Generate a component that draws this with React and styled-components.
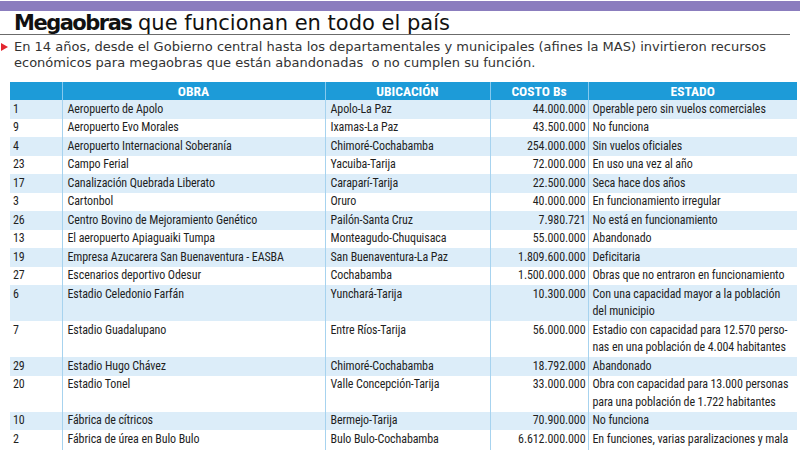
import React from "react";
import styled, { createGlobalStyle } from "styled-components";

const Global = createGlobalStyle`
  html, body { margin: 0; padding: 0; background: #fff; }
  body { font-family: "DejaVu Sans", sans-serif; color: #222; }
`;

const Page = styled.div`
  width: 800px;
  overflow: hidden;
`;

const TopBar = styled.div`
  height: 10px;
  margin-top: 1px;
  background: #8b7dbe;
`;

const TitleRow = styled.div`
  margin-right: 10px;
  padding: 2px 0 0 14px;
  border-bottom: 1px solid #6b6b6b;
`;

const Title = styled.h1`
  margin: 0;
  font-family: "DejaVu Sans", sans-serif;
  font-size: 21px;
  line-height: 21px;
  font-weight: normal;
  color: #111;
`;

const TitleStrong = styled.b`
  font-weight: bold;
  letter-spacing: -1.5px;
`;

const Lead = styled.div`
  display: flex;
  align-items: flex-start;
  gap: 6px;
  padding: 4px 0 0 1px;
`;

const Bullet = styled.span`
  flex: none;
  width: 0;
  height: 0;
  margin-top: 4px;
  border-top: 4px solid transparent;
  border-bottom: 4px solid transparent;
  border-left: 7px solid #e3262f;
`;

const LeadText = styled.p`
  margin: 0;
  font-family: "DejaVu Sans", sans-serif;
  font-size: 13px;
  line-height: 16px;
  color: #333;
`;

const Table = styled.table`
  margin: 11px 0 0 10px;
  width: 787px;
  border-collapse: collapse;
  table-layout: fixed;
  font-family: "Roboto", sans-serif;
  font-stretch: 87.5%;
  font-size: 12px;
  color: #1f1f1f;
`;

const Col = styled.col`
  width: ${(p) => p.$w}px;
`;

const Th = styled.th`
  background: #1d9bd8;
  color: #fff;
  font-weight: bold;
  font-size: 13.5px;
  height: 18px;
  padding: 0;
  text-align: center;
  line-height: 18px;
  border-left: 1px solid #86c9ee;
  &:first-child { border-left: none; }
`;

const Row = styled.tr`
  background: ${(p) => (p.$shade ? "#dcedf9" : "#ffffff")};
`;

const Td = styled.td`
  padding: 0.5px 2px 0.5px 5px;
  line-height: 17.5px;
  letter-spacing: -0.1px;
  vertical-align: top;
  text-align: ${(p) => (p.$right ? "right" : "left")};
  border-left: 1px solid #a7d3ef;
  white-space: nowrap;
  overflow: hidden;
  &:first-child { border-left: none; padding-left: 3px; }
  &:last-child { padding-left: 4px; padding-right: 0; }
`;

const cols = [52, 263, 165, 98, 209];

const rows = [
  ["1", "Aeropuerto de Apolo", "Apolo-La Paz", "44.000.000", ["Operable pero sin vuelos comerciales"]],
  ["9", "Aeropuerto Evo Morales", "Ixamas-La Paz", "43.500.000", ["No funciona"]],
  ["4", "Aeropuerto Internacional Soberanía", "Chimoré-Cochabamba", "254.000.000", ["Sin vuelos oficiales"]],
  ["23", "Campo Ferial", "Yacuiba-Tarija", "72.000.000", ["En uso una vez al año"]],
  ["17", "Canalización Quebrada Liberato", "Caraparí-Tarija", "22.500.000", ["Seca hace dos años"]],
  ["3", "Cartonbol", "Oruro", "40.000.000", ["En funcionamiento irregular"]],
  ["26", "Centro Bovino de Mejoramiento Genético", "Pailón-Santa Cruz", "7.980.721", ["No está en funcionamiento"]],
  ["13", "El aeropuerto Apiaguaiki Tumpa", "Monteagudo-Chuquisaca", "55.000.000", ["Abandonado"]],
  ["19", "Empresa Azucarera San Buenaventura - EASBA", "San Buenaventura-La Paz", "1.809.600.000", ["Deficitaria"]],
  ["27", "Escenarios deportivo Odesur", "Cochabamba", "1.500.000.000", ["Obras que no entraron en funcionamiento"]],
  ["6", "Estadio Celedonio Farfán", "Yunchará-Tarija", "10.300.000", ["Con una capacidad mayor a la población", "del municipio"]],
  ["7", "Estadio Guadalupano", "Entre Ríos-Tarija", "56.000.000", ["Estadio con capacidad para 12.570 perso-", "nas en una población de 4.004 habitantes"]],
  ["29", "Estadio Hugo Chávez", "Chimoré-Cochabamba", "18.792.000", ["Abandonado"]],
  ["20", "Estadio Tonel", "Valle Concepción-Tarija", "33.000.000", ["Obra con capacidad para 13.000 personas", "para una población de 1.722 habitantes"]],
  ["10", "Fábrica de cítricos", "Bermejo-Tarija", "70.900.000", ["No funciona"]],
  ["2", "Fábrica de úrea en Bulo Bulo", "Bulo Bulo-Cochabamba", "6.612.000.000", ["En funciones, varias paralizaciones y mala", "administración"]],
];

export default function App() {
  return (
    <Page>
      <Global />
      <TopBar />
      <TitleRow>
        <Title>
          <TitleStrong>Megaobras</TitleStrong> que funcionan en todo el país
        </Title>
      </TitleRow>
      <Lead>
        <Bullet />
        <LeadText>
          En 14 años, desde el Gobierno central hasta los departamentales y municipales (afines la MAS) invirtieron recursos
          <br />
          económicos para megaobras que están abandonadas&nbsp; o no cumplen su función.
        </LeadText>
      </Lead>
      <Table>
        <colgroup>
          {cols.map((w, i) => (
            <Col key={i} $w={w} />
          ))}
        </colgroup>
        <thead>
          <tr>
            <Th />
            <Th>OBRA</Th>
            <Th>UBICACIÓN</Th>
            <Th>COSTO Bs</Th>
            <Th>ESTADO</Th>
          </tr>
        </thead>
        <tbody>
          {rows.map((r, i) => (
            <Row key={i} $shade={i % 2 === 0}>
              <Td>{r[0]}</Td>
              <Td>{r[1]}</Td>
              <Td>{r[2]}</Td>
              <Td $right>{r[3]}</Td>
              <Td>
                {r[4].map((l, j) => (
                  <React.Fragment key={j}>
                    {j > 0 && <br />}
                    {l}
                  </React.Fragment>
                ))}
              </Td>
            </Row>
          ))}
        </tbody>
      </Table>
    </Page>
  );
}
